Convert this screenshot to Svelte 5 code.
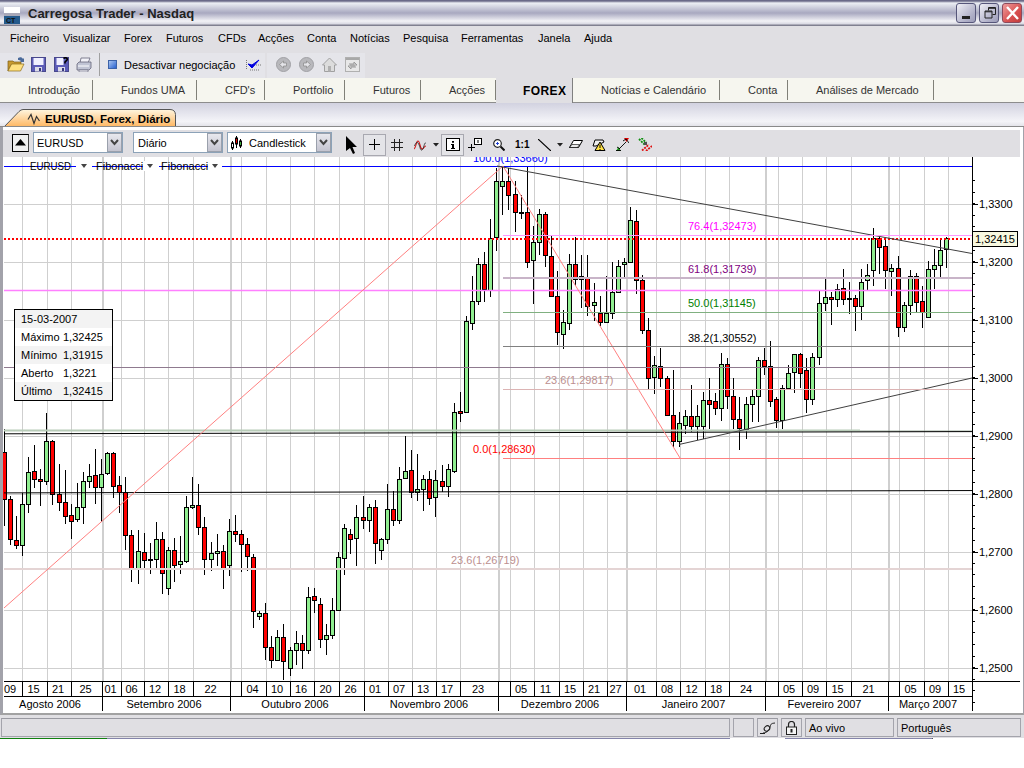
<script>
  const menu = ['Ficheiro', 'Visualizar', 'Forex', 'Futuros', 'CFDs', 'Acções', 'Conta', 'Notícias', 'Pesquisa', 'Ferramentas', 'Janela', 'Ajuda'];

  const tabs = ['Introdução', 'Fundos UMA', "CFD's", 'Portfolio', 'Futuros', 'Acções', 'FOREX', 'Notícias e Calendário', 'Conta', 'Análises de Mercado'];

  // candle rows: body top, body bottom, wick top, wick bottom, colour.
  // values are 3x offsets from the base y of each block
  const blockA = [[97,238,28,318,'r'],[238,358,228,374,'r'],[361,376,288,386,'r'],[253,376,218,407,'g'],[157,253,111,278,'g'],[154,178,75,204,'r'],[178,184,148,258,'r'],[64,184,-21,194,'g'],[64,223,60,254,'r'],[223,247,132,272,'r'],[247,289,150,311,'r'],[286,304,252,356,'r'],[262,298,190,305,'g'],[184,262,156,311,'g'],[169,184,132,205,'g'],[166,202,87,251,'r'],[163,202,118,305,'g'],[100,160,96,166,'g'],[100,199,96,233,'r'],[196,217,169,278,'r'],[217,346,172,389,'r'],[346,448,331,485,'r'],[394,445,331,491,'g'],[397,421,340,448,'r'],[418,421,370,461,'r'],[358,418,307,445,'g'],[358,460,337,521,'r'],[391,505,382,524,'g'],[391,436,355,485,'r'],[424,433,349,461,'g'],[262,424,229,430,'g'],[256,262,172,266,'g'],[256,322,193,344,'r'],[322,418,292,464,'r'],[400,418,367,452,'g'],[394,400,343,439,'g'],[394,445,376,506,'r'],[334,436,298,467,'g'],[334,343,286,367,'r'],[343,373,331,455,'r'],[373,409,355,452,'r'],[412,574,403,623,'r'],[580,589,574,599,'g'],[580,682,550,719,'r'],[682,721,649,743,'r'],[652,721,631,724,'g'],[652,724,613,779,'r'],[691,745,682,767,'g'],[670,691,634,735,'g'],[670,691,646,746,'r'],[532,691,502,701,'g'],[529,541,505,578,'r'],[553,658,535,683,'r'],[646,658,613,704,'g'],[571,646,535,658,'g'],[412,571,397,574,'g']];
  const blockB = [[355,443,343,494,'g'],[373,388,358,431,'r'],[322,385,286,467,'g'],[322,331,259,358,'r'],[292,331,283,365,'g'],[292,400,271,461,'r'],[388,421,385,449,'g'],[298,388,223,403,'g'],[298,331,244,347,'r'],[208,331,172,341,'g'],[184,205,79,208,'g'],[181,247,121,263,'r'],[238,247,133,272,'g'],[208,238,196,302,'g'],[208,265,184,284,'r'],[211,262,181,320,'g'],[214,229,166,247,'r'],[178,229,163,260,'g']];
  const blockC = [[787,963,758,970,'g'],[784,788,727,815,'r'],[514,787,498,790,'g'],[454,520,378,540,'g'],[343,454,325,466,'g'],[343,418,307,457,'r'],[265,421,208,442,'g'],[94,262,55,304,'g'],[94,109,50,196,'g'],[94,136,55,180,'r'],[133,187,92,245,'r'],[187,190,136,208,'r'],[187,337,50,355,'r'],[277,331,229,461,'g'],[193,277,178,316,'g'],[193,316,187,352,'r'],[319,439,256,442,'r'],[439,547,364,584,'r'],[517,553,481,598,'g'],[343,520,313,541,'g'],[343,388,262,409,'r'],[379,388,316,475,'g'],[382,469,316,499,'r'],[457,466,400,514,'g'],[490,517,439,529,'r'],[490,517,379,520,'g'],[427,490,337,508,'g'],[349,427,331,430,'g'],[337,343,325,388,'g'],[211,337,172,340,'g'],[214,391,181,433,'r'],[391,541,376,553,'r'],[541,685,505,718,'r'],[646,682,619,733,'g'],[649,685,595,712,'r'],[685,796,679,799,'r'],[796,874,660,892,'r']];
  const blockD = [[700,754,665,770,'g'],[677,706,661,733,'g'],[677,709,586,727,'r'],[677,709,646,751,'g'],[631,709,607,748,'g'],[631,643,565,718,'r'],[634,655,610,676,'r'],[523,655,490,694,'g'],[523,619,505,658,'r'],[619,688,565,718,'r'],[688,715,622,781,'r'],[643,718,622,747,'g'],[619,643,601,697,'g'],[511,619,502,697,'g'],[511,529,475,556,'r'],[529,634,454,652,'r'],[628,691,622,715,'r'],[595,691,586,718,'g'],[550,595,526,598,'g'],[493,547,493,610,'g'],[493,550,490,595,'r'],[541,628,505,670,'r'],[502,628,490,646,'g'],[340,502,304,526,'g'],[322,340,268,364,'g'],[322,328,307,406,'r'],[298,328,283,352,'g'],[295,328,238,346,'r'],[325,328,277,373,'r'],[325,349,316,424,'r'],[277,349,238,391,'g'],[256,271,223,304,'g'],[145,241,115,289,'g'],[145,172,142,253,'r'],[169,241,148,298,'r'],[235,244,223,319,'g'],[235,412,199,442,'r'],[346,412,337,427,'g'],[259,346,241,376,'g'],[259,337,250,365,'r'],[334,367,289,415,'r'],[238,382,214,382,'g'],[226,238,178,298,'g'],[181,226,145,260,'g'],[145,178,142,233,'g']];

  const toY = (base, v) => base + Math.round(v / 3);
  const scale = (rows, base) =>
    rows.map(([t, b, wt, wb, c]) => ({ top: toY(base, t), bottom: toY(base, b), wickTop: toY(base, wt), wickBottom: toY(base, wb), up: c === 'g' }));

  const candles = [...scale(blockA, 420), ...scale(blockB, 410), ...scale(blockC, 150), ...scale(blockD, 190)].map((c, i) => ({
    ...c,
    x: Math.floor(4.3 + 6.08 * i) + 0.5
  }));

  const grid = [22, 47, 71, 121, 144, 168, 193, 241, 266, 290, 314, 339, 364, 388, 412, 436, 460, 510, 534, 559, 583, 607, 656, 680, 705, 729, 778, 802, 826, 851, 899, 924, 948];
  const monthGrid = [102, 230, 498, 626, 765, 888];
  const prices = ['1,3300', '1,3200', '1,3100', '1,3000', '1,2900', '1,2800', '1,2700', '1,2600', '1,2500'];

  // minor ticks every 1/5 of a price step
  const ticks = Array.from({ length: 46 }, (_, i) => 180 + i * 11.6).filter((y) => y > 158);

  const days = [[0,22,'09'],[22,47,'15'],[47,71,'21'],[71,102,'25'],[102,121,'01'],[121,144,'06'],[144,168,'12'],[168,193,'18'],[193,230,'22'],[230,241,''],[241,266,'04'],[266,290,'10'],[290,314,'16'],[314,339,'20'],[339,364,'26'],[364,388,'01'],[388,412,'07'],[412,436,'13'],[436,460,'17'],[460,498,'23'],[498,510,''],[510,534,'05'],[534,559,'11'],[559,583,'15'],[583,607,'21'],[607,626,'27'],[626,656,'01'],[656,680,'08'],[680,705,'12'],[705,729,'18'],[729,765,'24'],[765,778,''],[778,802,'05'],[802,826,'09'],[826,851,'15'],[851,888,'21'],[888,899,''],[899,924,'05'],[924,948,'09'],[948,972,'15']];
  const months = [[2,102,'Agosto 2006'],[102,230,'Setembro 2006'],[230,364,'Outubro 2006'],[364,498,'Novembro 2006'],[498,626,'Dezembro 2006'],[626,765,'Janeiro 2007'],[765,888,'Fevereiro 2007'],[888,972,'Março 2007']];

  const fibLevels = [
    { y: 235, color: '#ff99ff', w: 1, label: '76.4(1,32473)', lx: 688, text: '#ff00ff' },
    { y: 277.5, color: '#c8b4c8', w: 2, label: '61.8(1,31739)', lx: 688, text: '#800080' },
    { y: 312, color: '#80b080', w: 1, label: '50.0(1,31145)', lx: 688, text: '#008000' },
    { y: 346.5, color: '#808080', w: 1, label: '38.2(1,30552)', lx: 688, text: '#000000' },
    { y: 389, color: '#dcb4b4', w: 1, label: '23.6(1,29817)', lx: 545, text: '#bc8f8f' },
    { y: 458, color: '#ff8080', w: 1, label: '0.0(1,28630)', lx: 473, text: '#ff0000' }
  ];

  const info = [
    ['15-03-2007', ''],
    ['Máximo', '1,32425'],
    ['Mínimo', '1,31915'],
    ['Aberto', '1,3221'],
    ['Último', '1,32415']
  ];
</script>

<div class="window">
  <header class="titlebar">
    <svg class="appicon" width="18" height="20" viewBox="0 0 18 20">
      <rect x="2" y="3" width="16" height="6" fill="#fff" />
      <rect x="2" y="9" width="16" height="3" fill="#a8a8b8" />
      <rect x="2" y="12" width="16" height="8" fill="#245a8c" />
      <text x="4" y="19" class="appicon-text">CT</text>
    </svg>
    <span class="apptitle">Carregosa Trader - Nasdaq</span>
    <div class="wincontrols">
      <button class="winbtn" aria-label="Minimizar"><svg width="17" height="18"><rect x="4" y="12" width="8" height="3" fill="#222" /></svg></button>
      <button class="winbtn" aria-label="Restaurar"><svg width="17" height="18"><path d="M7.5 3.5h7v7h-3M7.5 3.5v3M4 7h7v7H4z M4 7.8h7 M7.5 4.3h7" fill="none" stroke="#222" /></svg></button>
      <button class="winbtn close" aria-label="Fechar"><svg width="17" height="18"><path d="M3 3l11 12M14 3L3 15" stroke="#fff" stroke-width="2.4" /></svg></button>
    </div>
  </header>

  <nav class="menubar">
    {#each menu as item}
      <span>{item}</span>
    {/each}
  </nav>

  <div class="toolbar">
    <div class="toolgroup main">
      <svg class="ico folder" width="18" height="17" viewBox="0 0 18 17">
        <path d="M11 2c2-1 4-1 5 1l1-1v4h-4l1-1c-1-1-2-1-3-1z" fill="#4a6a9a" />
        <path d="M1 5h5l1 1h7v3H4L1 15z" fill="#c89a30" stroke="#7a5c18" stroke-width=".7" />
        <path d="M1 15l3.500-7H17l-3.500 7z" fill="#ffe080" stroke="#8a6a18" stroke-width=".7" />
      </svg>
      <svg class="ico" width="15" height="15" viewBox="0 0 15 15">
        <rect x=".5" y=".5" width="14" height="14" fill="#5c5cb8" stroke="#48488c" />
        <rect x="2.500" y="1" width="10" height="7" fill="#f0f0ff" />
        <rect x="4" y="10" width="7" height="4.500" fill="#dcdce8" />
        <rect x="8" y="11" width="2" height="3" fill="#38387c" />
      </svg>
      <svg class="ico save2" width="15" height="15" viewBox="0 0 15 15">
        <rect x=".5" y=".5" width="14" height="14" fill="#5c5cb8" stroke="#48488c" />
        <rect x="2.500" y="1" width="7" height="7" fill="#f0f0ff" />
        <rect x="4" y="10" width="7" height="4.500" fill="#dcdce8" />
        <rect x="8" y="11" width="2" height="3" fill="#38387c" />
        <path d="M9.500 1.500c2-1.500 4.500-.5 3.500 1.500l-2 2v1.500" fill="none" stroke="#000" stroke-width="1.600" />
      </svg>
      <svg class="ico printer" width="16" height="15" viewBox="0 0 16 15">
        <path d="M5 1h9l-2 5H4z" fill="#f2f2f8" stroke="#66667a" stroke-width=".8" />
        <path d="M1 7l2-2h12v6l-2 2H1z" fill="#c0c4d4" stroke="#66667a" stroke-width=".8" />
        <path d="M2 9h11" stroke="#fff" />
        <path d="M3 13h9v2H3z" fill="#e8e8f0" stroke="#66667a" stroke-width=".6" />
      </svg>
      <i class="sep"></i>
      <i class="trade-dot"></i>
      <span class="trade-label">Desactivar negociação</span>
      <svg class="ico check" width="16" height="15" viewBox="0 0 16 15">
        <path d="M1.500 3v10M5 8h11M5 13h9" stroke="#777" stroke-dasharray="1 1" fill="none" />
        <path d="M3 7l4 4 7-8-7 5z" fill="#0000e0" stroke="#0000e0" />
      </svg>
    </div>
    <div class="toolgroup nav">
      <svg class="ico" width="15" height="15" viewBox="0 0 15 15">
        <circle cx="7.500" cy="7.500" r="7" fill="#b8b8bc" stroke="#a0a0a4" />
        <path d="M3.500 7.500l4-3.500v2h3v3h-3v2z" fill="#e4e4e8" stroke="#888" stroke-width=".7" />
      </svg>
      <svg class="ico" width="15" height="15" viewBox="0 0 15 15">
        <circle cx="7.500" cy="7.500" r="7" fill="#b8b8bc" stroke="#a0a0a4" />
        <path d="M11.500 7.500l-4-3.500v2h-3v3h3v2z" fill="#e4e4e8" stroke="#888" stroke-width=".7" />
      </svg>
      <svg class="ico" width="15" height="15" viewBox="0 0 15 15">
        <path d="M7.500 1L.5 8h2v6.500h10V8h2z" fill="#dcdcdc" stroke="#a0a0a0" />
        <rect x="6" y="9" width="3" height="5.500" fill="#b0b0b0" />
      </svg>
      <svg class="ico" width="15" height="15" viewBox="0 0 15 15">
        <rect x=".5" y=".5" width="14" height="14" fill="#e8e8e8" stroke="#b0b0b0" />
        <rect x="1" y="1" width="13" height="2" fill="#a8a8a8" />
        <path d="M4 7h5V5l3 3H5M11 10H6v2L3 9h7" fill="none" stroke="#999" />
      </svg>
    </div>
  </div>

  <div class="tabs">
    {#each tabs as tab}
      <div class="tab" class:active={tab === 'FOREX'}><span>{tab}</span></div>
    {/each}
  </div>

  <div class="doctabs">
    <svg class="doctab" width="174" height="19" viewBox="0 0 174 19">
      <defs>
        <linearGradient id="tabfill" x1="0" y1="0" x2="0" y2="1">
          <stop offset="0" stop-color="#fff6e0" />
          <stop offset="1" stop-color="#ffb45c" />
        </linearGradient>
      </defs>
      <path d="M.5 18.500L16 2.500q2-2 4-2h147q5 0 5.500 5v13" fill="url(#tabfill)" stroke="#555" />
      <path d="M25 10.500l3-5 3 9 2.500-7 3 4.500" fill="none" stroke="#333" stroke-width="1.200" />
      <text x="42" y="14" class="doctab-text">EURUSD, Forex, Diário</text>
    </svg>
  </div>

  <div class="frame">
    <div class="charttools">
      <button class="collapse" aria-label="Recolher"><svg width="11" height="7"><path d="M5.500 0L11 6.500H0z" fill="#000" /></svg></button>
      <div class="combo symbol">EURUSD<span class="arrow"><svg width="9" height="7"><path d="M1 1l3.500 4L8 1" fill="none" stroke="#444" stroke-width="2" /></svg></span></div>
      <div class="combo period">Diário<span class="arrow"><svg width="9" height="7"><path d="M1 1l3.500 4L8 1" fill="none" stroke="#444" stroke-width="2" /></svg></span></div>
      <div class="combo ctype">
        <svg class="candle-ico" width="11" height="14" viewBox="0 0 11 14">
          <path d="M1.500 5v9M5.500 0v12M9.500 3v9" stroke="#000" />
          <rect x=".5" y="7" width="2" height="5" fill="#fff" stroke="#000" />
          <rect x="4.500" y="2" width="2" height="6" fill="#e00000" stroke="#000" />
          <rect x="8.500" y="5" width="2" height="5" fill="#40b040" stroke="#000" />
        </svg>
        Candlestick<span class="arrow"><svg width="9" height="7"><path d="M1 1l3.500 4L8 1" fill="none" stroke="#444" stroke-width="2" /></svg></span>
      </div>

      <div class="charticons">
        <svg class="tool arrow-tool" width="11" height="18" viewBox="0 0 11 18"><path d="M0 0l11 11H6.500l2.500 6-2 1-3-6-4 3z" fill="#000" /></svg>
        <span class="toolbox cross"><svg width="13" height="13"><path d="M6.500 1v11M1 6.500h11" stroke="#000" /></svg></span>
        <svg class="tool gridtool" width="12" height="12" viewBox="0 0 12 12"><path d="M3.500 0v12M8.500 0v12M0 3.500h12M0 8.500h12" stroke="#222" /></svg>
        <svg class="tool wave" width="12" height="12" viewBox="0 0 12 12">
          <path d="M0 10c2-1 2-8 4-8s2 8 4 8 2-3 4-3" fill="none" stroke="#d01818" stroke-width="1.100" />
          <path d="M0 7c2-2 2-5 4-3s2 8 4 7 2-8 4-7" fill="none" stroke="#222" stroke-width=".8" />
        </svg>
        <svg class="tool drop1" width="6" height="4"><path d="M0 0h6L3 3.500z" fill="#222" /></svg>
        <span class="toolbox infobtn"><svg width="14" height="13"><rect x=".5" y=".5" width="13" height="12" fill="#fff" stroke="#000" /><path d="M6 3h2v1.800H6zM5 6h3v4h1v1H5v-1h1V7H5z" fill="#000" /></svg></span>
        <svg class="tool plusbox" width="14" height="13" viewBox="0 0 14 13"><path d="M0 9.500h7M3.500 6v7" stroke="#000" /><rect x="6.500" y=".5" width="7" height="6" fill="#fff" stroke="#000" /><rect x="9.500" y="2" width="1" height="3" fill="#000" /></svg>
        <svg class="tool lens" width="12" height="12" viewBox="0 0 12 12"><circle cx="4.500" cy="4.500" r="3.800" fill="#fff" stroke="#222" stroke-width="1.200" /><path d="M3 4.500h3M4.500 3v3" stroke="#2040d0" /><path d="M7.500 7.500l4 4" stroke="#111" stroke-width="2" /></svg>
        <span class="oneone">1:1</span>
        <svg class="tool line" width="13" height="12"><path d="M0 0l13 12" stroke="#000" stroke-width="1.200" /></svg>
        <svg class="tool drop2" width="6" height="4"><path d="M0 0h6L3 3.500z" fill="#222" /></svg>
        <svg class="tool eraser" width="14" height="9" viewBox="0 0 14 9"><path d="M4.500.5h9l-4 7H.5z" fill="#fff" stroke="#000" /><path d="M3 4.500h7.500l-2 3H.5z" fill="#e8e8e8" stroke="#000" stroke-width=".6" /></svg>
        <svg class="tool alert" width="14" height="12" viewBox="0 0 14 12"><path d="M3 1h8l1 2-8 4H1z" fill="#eee" stroke="#000" /><path d="M8 3l5 8.500H3z" fill="#ffe040" stroke="#000" /><path d="M8 5.500v3.500M8 10v1" stroke="#000" /></svg>
        <svg class="tool arrows" width="13" height="13" viewBox="0 0 13 13"><path d="M8 0h5l-2.500 4z" fill="#e00000" /><path d="M0 13h5l-2.500-4z" fill="#20a020" /><path d="M1 9l3 2M3 11l7-7M7 3l3-2 3 4M0 12.500h5" fill="none" stroke="#000" stroke-width=".9" /></svg>
        <svg class="tool multi" width="14" height="13" viewBox="0 0 14 13"><path d="M1 1l6 6M3.500 0l5 5" stroke="#109010" stroke-width="1.800" stroke-dasharray="2 1" /><path d="M4 12.500l7-6M8 13l6-5" stroke="#e01010" stroke-width="1.800" stroke-dasharray="2 1" /><rect x="6" y="4" width="3" height="3" fill="#505050" /></svg>
      </div>
    </div>

    <div class="chart">
      <svg width="1017" height="556" viewBox="3 157 1017 556">
        <g class="grid">
          {#each [204, 262, 320, 378, 436, 494, 552, 610, 668] as y}
            <line x1="4" x2="972" y1={y + 0.5} y2={y + 0.5} />
          {/each}
          {#each grid as x}
            <line x1={x + 0.5} x2={x + 0.5} y1="157" y2="681" />
          {/each}
          {#each monthGrid as x}
            <line class="month" x1={x + 1} x2={x + 1} y1="157" y2="681" />
          {/each}
        </g>

        <g class="candles">
          {#each candles as c}
            <line x1={c.x} x2={c.x} y1={c.wickTop} y2={c.wickBottom} />
            <rect x={c.x - 2} y={c.top + 0.5} width="4" height={c.bottom - c.top} fill={c.up ? '#90ee90' : '#ff0000'} />
          {/each}
        </g>

        <!-- support / resistance and trend lines go on top of the candles -->
        <line x1="4" x2="972" y1="166.5" y2="166.5" stroke="#0000ff" shape-rendering="crispEdges" />
        <line x1="4" x2="972" y1="239" y2="239" stroke="#ff0000" stroke-width="2" stroke-dasharray="2 2" shape-rendering="crispEdges" />
        <line x1="4" x2="972" y1="290.5" y2="290.5" stroke="#ff80ff" stroke-width="1.500" />
        <line x1="4" x2="972" y1="367.5" y2="367.5" stroke="#8f7a8f" shape-rendering="crispEdges" />
        <line x1="4" x2="860" y1="430.5" y2="430.5" stroke="#b8ccb8" stroke-width="2" />
        <line x1="860" x2="972" y1="431" y2="431" stroke="#9aaa9a" />
        <line x1="4" x2="972" y1="433.8" y2="431.6" stroke="#000" />
        <line x1="4" x2="972" y1="492.9" y2="490.55" stroke="#000" />
        <line x1="4" x2="972" y1="569" y2="569" stroke="#e4d4d4" stroke-width="2" />

        <polyline points="4,608 503,166 680,458" fill="none" stroke="#ff8080" />
        <line x1="497" y1="166" x2="972" y2="253.500" stroke="#404040" />
        <line x1="679" y1="444.500" x2="972" y2="378" stroke="#404040" />

        {#each fibLevels as f}
          <line x1="503" x2="972" y1={f.y} y2={f.y} stroke={f.color} stroke-width={f.w} shape-rendering="crispEdges" />
          <text x={f.lx} y={f.y - 5} fill={f.text} class="chart-text">{f.label}</text>
        {/each}
        <text x="473" y="162" fill="#0000ff" class="chart-text">100.0(1,33660)</text>
        <text x="451" y="564" fill="#bc8f8f" class="chart-text">23.6(1,26719)</text>

        <!-- legend -->
        <g class="legend">
          <rect x="76" y="161" width="16" height="10" fill="#fff" />
          <rect x="143" y="161" width="16" height="10" fill="#fff" />
          <rect x="208" y="161" width="14" height="10" fill="#fff" />
          <text x="30" y="170" class="chart-text" textLength="41" lengthAdjust="spacingAndGlyphs">EURUSD</text>
          <path d="M81 164h6l-3 4z" fill="#444" />
          <text x="96" y="170" class="chart-text">Fibonacci</text>
          <path d="M147 164h6l-3 4z" fill="#444" />
          <text x="161" y="170" class="chart-text">Fibonacci</text>
          <path d="M212 164h6l-3 4z" fill="#444" />
        </g>

        <!-- price axis -->
        <g class="axis" shape-rendering="crispEdges">
          <line x1="972.5" x2="972.5" y1="157" y2="681" />
          {#each ticks as y}
            <line x1="972" x2="975" y1={Math.round(y) + 0.5} y2={Math.round(y) + 0.5} />
          {/each}
          {#each prices as p, i}
            <line x1="972" x2="978" y1={204.5 + i * 58} y2={204.5 + i * 58} />
          {/each}
          <line x1="4" x2="1020" y1="681.5" y2="681.5" />
          <line x1="4" x2="972" y1="696.5" y2="696.5" />
          {#each days as d}
            <line x1={d[1] + 0.5} x2={d[1] + 0.5} y1="681" y2="696" />
          {/each}
          {#each months as m}
            <line x1={m[1] + 0.5} x2={m[1] + 0.5} y1="696" y2="711" />
          {/each}
        </g>
        {#each prices as p, i}
          <text x="979" y={208 + i * 58} class="chart-text">{p}</text>
        {/each}
        <rect class="lastprice" x="972.5" y="231.500" width="45" height="15" />
        <text x="975" y="243" class="chart-text">1,32415</text>

        {#each days as d}
          <text x={(d[0] + d[1]) / 2 - 1} y="693" text-anchor="middle" class="chart-text">{d[2]}</text>
        {/each}
        {#each months as m}
          <text x={(m[0] + m[1]) / 2 - 2} y="708" text-anchor="middle" class="chart-text">{m[2]}</text>
        {/each}
      </svg>

      <div class="infobox">
        {#each info as row}
          <div class="inforow"><span>{row[0]}</span><span>{row[1]}</span></div>
        {/each}
      </div>
    </div>
  </div>

  <footer class="statusbar">
    <div class="panel grow"></div>
    <div class="panel blank"></div>
    <div class="panel icon">
      <svg width="16" height="14" viewBox="0 0 16 14"><path d="M0 12.500h5M3 12c3 0 6-2 7-6s2-3.500 5-4" fill="none" stroke="#222" /><ellipse cx="7" cy="7.500" rx="3" ry="2.500" fill="none" stroke="#222" transform="rotate(-40 7 7.500)" /></svg>
    </div>
    <div class="panel icon">
      <svg width="11" height="14" viewBox="0 0 11 14"><path d="M2.500 6V3.500a3 3 0 016 0V6" fill="none" stroke="#222" stroke-width="1.200" /><rect x=".5" y="6" width="10" height="7.500" fill="#f4f4f4" stroke="#222" /><rect x="4.500" y="8" width="2" height="3.500" fill="#222" /></svg>
    </div>
    <div class="panel live">Ao vivo</div>
    <div class="panel lang">Português</div>
  </footer>
  <div class="bottomline"><i class="green"></i><i class="bluegrey"></i><i class="gap"></i><i class="bluegrey last"></i></div>
</div>

<style>
  :global(body) {
    margin: 0;
    background: #fff;
  }

  .window {
    width: 1024px;
    display: flex;
    flex-direction: column;
    font-family: 'Liberation Sans', Arial, sans-serif;
    font-size: 11px;
    color: #000;
  }

  .titlebar {
    height: 26px;
    box-sizing: border-box;
    display: flex;
    align-items: center;
    padding: 0 2px 0 2px;
    background: linear-gradient(#6a6a88 0, #6a6a88 1px, #eceff4 3px, #a8a8c0 13px, #f2f2f6 21px, #d8d8e2 24px, #808090 25px);
  }

  .appicon {
    margin-top: 2px;
  }

  .appicon-text {
    font: bold 7px 'Liberation Sans', sans-serif;
    fill: #111;
  }

  .apptitle {
    margin-left: 8px;
    font-size: 13px;
    font-weight: bold;
    color: #222;
  }

  .wincontrols {
    margin-left: auto;
    display: flex;
    gap: 3px;
  }

  .winbtn {
    width: 20px;
    height: 20px;
    padding: 0;
    border: 1px solid #56567a;
    border-radius: 3px;
    background: linear-gradient(135deg, #f0f0f6, #b0b0c8 70%, #9c9cb8);
  }

  .winbtn.close {
    background: linear-gradient(135deg, #ee9c9c, #d85050 60%, #c03c3c);
    border-color: #8c4a5c;
  }

  .menubar {
    height: 26px;
    box-sizing: border-box;
    display: grid;
    grid-template-columns: 53px 61px 42px 52px 40px 49px 43px 53px 58px 77px 46px auto;
    justify-content: start;
    align-items: center;
    padding: 0 0 2px 10px;
    background: #e0dfe3;
  }

  .toolbar {
    height: 26px;
    display: flex;
    background: #e0dfe3;
    gap: 2px;
  }

  .toolgroup {
    display: flex;
    align-items: center;
    box-sizing: border-box;
    background: #e5e5ea;
    margin-top: 1px;
    padding-bottom: 2px;
  }

  .toolgroup.main {
    width: 265px;
  }

  .toolgroup.nav {
    width: 98px;
    gap: 8px;
    padding-left: 9px;
  }

  .ico {
    flex: none;
    margin-left: 6px;
  }

  .ico.folder {
    margin-left: 7px;
  }

  .ico.save2 {
    margin-left: 8px;
  }

  .ico.printer {
    margin-left: 7px;
  }

  .toolgroup.nav .ico {
    margin-left: 0;
  }

  .sep {
    width: 1px;
    height: 23px;
    margin-left: 7px;
    background: #a0a0a0;
  }

  .trade-dot {
    width: 7px;
    height: 7px;
    margin-left: 8px;
    border: 1px solid #3c62a8;
    background: linear-gradient(135deg, #a8c4f0, #2a62d0);
  }

  .trade-label {
    margin-left: 7px;
    white-space: nowrap;
  }

  .ico.check {
    margin-left: 10px;
  }

  .tabs {
    height: 25px;
    box-sizing: border-box;
    display: grid;
    grid-template-columns: 93px 104px 68px 80px 76px 75px 77px 147px 68px 146px 1fr;
    background: #f6f6ef;
    border-bottom: 1px solid #8d8d8d;
    color: #333;
  }

  .tab {
    margin: 2px 0 2px;
    border-right: 1px solid #808078;
    display: flex;
    align-items: center;
    padding-left: 28px;
    white-space: nowrap;
  }

  .tab.active {
    margin: 0 0 -1px;
    background: #e0dfe3;
    border-right-color: #808080;
    padding-left: 27px;
    font-size: 12px;
    font-weight: bold;
    color: #000;
    letter-spacing: 0.4px;
  }

  .doctabs {
    height: 24px;
    box-sizing: border-box;
    background: linear-gradient(#d2d2e0, #f4f4f8 80%, #e4e4ea);
    border-bottom: 1px solid #8a8a8a;
    padding: 6px 0 0 3px;
    overflow: hidden;
  }

  .doctab {
    display: block;
  }

  .doctab-text {
    font: bold 11.500px 'Liberation Sans', sans-serif;
    fill: #000;
  }

  .frame {
    background: #fff;
    border-left: 3px solid #a2a2aa;
    border-right: 1px solid #a2a2aa;
    border-bottom: 2px solid #a2a2a2;
    padding-right: 3px;
  }

  .charttools {
    height: 27px;
    box-sizing: border-box;
    margin-top: 3px;
    padding-bottom: 2px;
    display: flex;
    align-items: center;
    background: #e0dfe3;
  }

  .collapse {
    width: 17px;
    height: 18px;
    margin-left: 9px;
    padding: 0;
    display: flex;
    align-items: center;
    justify-content: center;
    background: #f0f0f0;
    border: 1px solid #000;
    border-right-color: #444;
  }

  .combo {
    position: relative;
    height: 21px;
    box-sizing: border-box;
    display: flex;
    align-items: center;
    padding-left: 3px;
    background: #fff;
    border: 1px solid #8ca2b8;
    white-space: nowrap;
  }

  .symbol {
    width: 90px;
    margin-left: 4px;
  }

  .period {
    width: 90px;
    margin-left: 10px;
    padding-left: 4px;
  }

  .ctype {
    width: 105px;
    margin-left: 4px;
    gap: 7px;
  }

  .arrow {
    position: absolute;
    right: 0;
    top: 0;
    width: 15px;
    height: 19px;
    display: flex;
    align-items: center;
    justify-content: center;
    background: linear-gradient(#e8e8ee, #c4c4d0);
    border: 1px solid #9aa0ac;
    box-sizing: border-box;
  }

  .charticons {
    display: flex;
    align-items: center;
    margin: 4px 0 0 14px;
  }

  .tool {
    flex: none;
  }

  .toolbox {
    width: 23px;
    height: 22px;
    box-sizing: border-box;
    display: flex;
    align-items: center;
    justify-content: center;
    border: 1px solid #a8a8b0;
    background: #e4e4e8;
  }

  .cross {
    margin-left: 6px;
  }

  .gridtool {
    margin-left: 5px;
  }

  .wave {
    margin-left: 11px;
  }

  .drop1 {
    margin-left: 7px;
  }

  .infobtn {
    margin-left: 2px;
  }

  .plusbox {
    margin-left: 4px;
  }

  .lens {
    margin-left: 11px;
  }

  .oneone {
    margin-left: 10px;
    width: 14px;
    font-weight: bold;
    font-size: 10px;
  }

  .line {
    margin-left: 9px;
  }

  .drop2 {
    margin-left: 6px;
  }

  .eraser {
    margin-left: 6px;
  }

  .alert {
    margin-left: 9px;
  }

  .arrows {
    margin-left: 10px;
  }

  .multi {
    margin-left: 9px;
  }

  .chart {
    position: relative;
    height: 556px;
  }

  .chart svg {
    display: block;
  }

  .grid line {
    stroke: #cfcfcf;
    shape-rendering: crispEdges;
  }

  .grid line.month {
    stroke-width: 2;
  }

  .candles line,
  .candles rect {
    stroke: #000;
    shape-rendering: crispEdges;
  }

  .chart-text {
    font: 11px 'Liberation Sans', Arial, sans-serif;
  }

  .axis line {
    stroke: #000;
  }

  .lastprice {
    fill: #f8f8e0;
    stroke: #000;
    shape-rendering: crispEdges;
  }

  /* sits over the chart, page position 14,309 */
  .infobox {
    position: absolute;
    left: 11px;
    top: 152px;
    width: 99px;
    box-sizing: border-box;
    border: 1px solid #000;
    background: #fff;
  }

  .inforow {
    height: 18px;
    display: grid;
    grid-template-columns: 42px 1fr;
    align-items: center;
    padding-left: 6px;
    white-space: nowrap;
  }

  .inforow:nth-child(odd) {
    background: #f3f3f3;
  }

  .statusbar {
    height: 23px;
    box-sizing: border-box;
    display: flex;
    gap: 3px;
    padding: 3px 2px 0 1px;
    background: #e0dfe3;
  }

  .panel {
    height: 19px;
    box-sizing: border-box;
    display: flex;
    align-items: center;
    border: 1px solid #a4a4ac;
    border-top-color: #9a9aa2;
    padding-left: 3px;
  }

  .panel.grow {
    width: 729px;
  }

  .panel.blank {
    width: 21px;
  }

  .panel.icon {
    width: 21px;
    justify-content: center;
    padding: 0;
  }

  .panel.live {
    width: 89px;
  }

  .panel.lang {
    width: 124px;
  }

  .bottomline {
    height: 1px;
    display: flex;
    position: relative;
  }

  .bottomline i {
    display: block;
    height: 1px;
  }

  .bottomline .green {
    width: 107px;
    background: #108010;
  }

  .bottomline .bluegrey {
    width: 623px;
    background: #8484aa;
  }

  .bottomline .gap {
    width: 55px;
  }

  .bottomline .bluegrey.last {
    width: 147px;
    height: 3px;
    background: linear-gradient(#8484aa 1px, transparent 1px);
    border-right: 1px solid #555;
  }
</style>
